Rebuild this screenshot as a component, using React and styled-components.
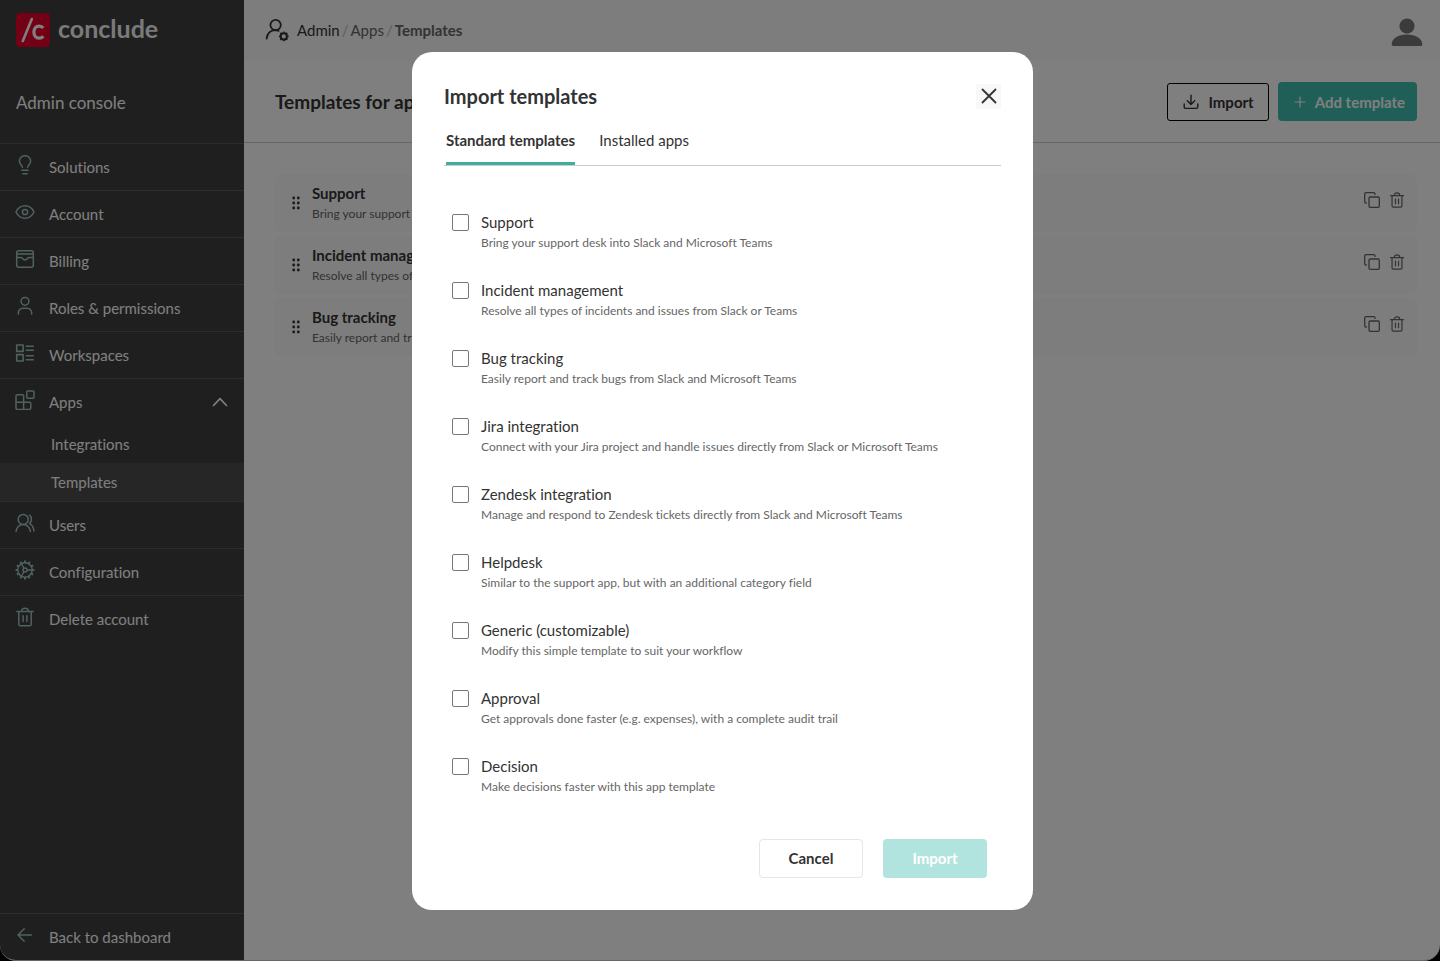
import React, { useState } from "react";
import styled, { createGlobalStyle } from "styled-components";

const strokeProps = {
  fill: "none",
  stroke: "currentColor",
  strokeLinecap: "round",
  strokeLinejoin: "round",
};

const BulbIcon = () => (
  <svg width="20" height="20" viewBox="0 0 20 20" {...strokeProps} strokeWidth="1.5">
    <path d="M7.400 12.200C7.200 10.200 4.400 9.400 4.400 6.300a5.600 5.600 0 0 1 11.200 0c0 3.100-2.800 3.900-3 5.900" />
    <path d="M6.800 15.300h6.400M7.800 18.700h4.400" />
  </svg>
);

const EyeIcon = () => (
  <svg width="20" height="20" viewBox="0 0 20 20" {...strokeProps} strokeWidth="1.5">
    <path d="M1 10c1.800-3.900 5.200-6.200 9-6.200s7.200 2.300 9 6.200c-1.800 3.900-5.200 6.200-9 6.200S2.800 13.900 1 10z" />
    <circle cx="10" cy="10" r="2.600" />
  </svg>
);

const BillingIcon = () => (
  <svg width="20" height="20" viewBox="0 0 20 20" {...strokeProps} strokeWidth="1.5">
    <rect x="1.700" y="1.700" width="16.600" height="16.600" rx="2" />
    <path d="M1.700 5.100h16.600M1.700 8.400h4.500c1 0 1.600 2.600 3.800 2.600s2.800-2.600 3.800-2.600h4.500" />
  </svg>
);

const PersonIcon = () => (
  <svg width="20" height="20" viewBox="0 0 20 20" {...strokeProps} strokeWidth="1.5">
    <circle cx="10" cy="5.300" r="3.900" />
    <path d="M3.400 18v-1.400a4.400 4.400 0 0 1 4.400-4.400h4.400a4.400 4.400 0 0 1 4.400 4.400V18" />
  </svg>
);

const WorkspacesIcon = () => (
  <svg width="20" height="20" viewBox="0 0 20 20" {...strokeProps} strokeWidth="1.6">
    <rect x="1.700" y="2" width="6.400" height="6.400" />
    <rect x="1.700" y="11.600" width="6.400" height="6.400" />
    <path d="M11.300 3.200h7M11.300 7.200h7M11.300 12.800h7M11.300 16.800h7" />
  </svg>
);

const AppsIcon = () => (
  <svg width="20" height="20" viewBox="0 0 20 20" {...strokeProps} strokeWidth="1.5">
    <path d="M2.400 4.800h5.200a1 1 0 0 1 1 1v6.400h6.200a1 1 0 0 1 1 1V18a1.400 1.400 0 0 1-1.400 1.400h-12A1.400 1.400 0 0 1 1 18V6.200a1.400 1.400 0 0 1 1.400-1.400z" />
    <path d="M1 12.200h7.600v7.200" />
    <rect x="11.800" y="1" width="7.200" height="7.200" rx="1" />
  </svg>
);

const UsersIcon = () => (
  <svg width="20" height="20" viewBox="0 0 20 20" {...strokeProps} strokeWidth="1.5">
    <circle cx="8.200" cy="6.400" r="5" />
    <path d="M1 18.400c.8-4.400 3.400-7 7.200-7s6.400 2.600 7.200 7" />
    <path d="M14.600 2c2.400 2 2.400 6.400 0 8.600 2.600 1.200 4 4.200 4.400 7.400" />
  </svg>
);

const GearIcon = () => (
  <svg width="20" height="20" viewBox="0 0 20 20" {...strokeProps} strokeWidth="1.4">
    <circle cx="10" cy="10" r="7.200" />
    <circle cx="10" cy="10" r="2" />
    <path d="M12 10h5M9 8.300 6.500 4M9 11.700 6.500 16" />
    {[...Array(12)].map((_, i) => (
      <path key={i} d="M10 2.600V.6" strokeWidth="2" strokeLinecap="butt" transform={`rotate(${i * 30} 10 10)`} />
    ))}
  </svg>
);

const TrashIcon = ({ size = 20 }) => (
  <svg width={size} height={size} viewBox="0 0 20 20" {...strokeProps} strokeWidth="1.5">
    <path d="M1.900 4.600h16.200M3.800 4.600v12.600a1.600 1.600 0 0 0 1.600 1.600h9.200a1.600 1.600 0 0 0 1.600-1.600V4.600" />
    <path d="M6.600 4.400c0-1.900 1.200-3.200 3.400-3.200s3.400 1.300 3.400 3.200M8.100 8.800v5.800M11.900 8.800v5.800" />
  </svg>
);

const BackIcon = () => (
  <svg width="20" height="20" viewBox="0 0 20 20" {...strokeProps} strokeWidth="1.5">
    <path d="M16.500 10H3M9.200 3.800 3 10l6.200 6.200" />
  </svg>
);

const ChevronUpIcon = () => (
  <svg width="16" height="10" viewBox="0 0 16 10" {...strokeProps} strokeWidth="1.7">
    <path d="m1.500 8.500 6.500-6.800 6.500 6.800" />
  </svg>
);

const AdminIcon = () => (
  <svg width="24" height="24" viewBox="0 0 24 24" {...strokeProps} strokeWidth="1.8">
    <circle cx="10.600" cy="7" r="5.200" />
    <path d="M1.600 20.600c.7-4.800 3.600-8.200 8.600-8.400 1.400 0 2.400.2 3.400.7" />
    <circle cx="18.800" cy="18.400" r="3.100" strokeWidth="2" />
    {[...Array(8)].map((_, i) => (
      <path key={i} d="M18.800 14.800v-1.200" strokeWidth="1.800" strokeLinecap="butt" transform={`rotate(${i * 45} 18.800 18.400)`} />
    ))}
  </svg>
);

const AvatarIcon = () => (
  <svg width="32" height="30" viewBox="0 0 32 30" fill="currentColor">
    <circle cx="16" cy="8" r="7.600" />
    <path d="M.7 26.200c.3-5.600 6.600-9.600 15.300-9.600s15 4 15.300 9.600c.1 1.200-.6 1.800-1.700 1.800H2.400c-1.100 0-1.800-.6-1.700-1.800z" />
  </svg>
);

const DownloadIcon = () => (
  <svg width="16" height="16" viewBox="0 0 16 16" {...strokeProps} strokeWidth="1.4">
    <path d="M8 1.200v9M4.300 6.800 8 10.500l3.700-3.700M1.200 10v2.800a1.600 1.600 0 0 0 1.600 1.600h10.400a1.600 1.600 0 0 0 1.600-1.600V10" />
  </svg>
);

const PlusIcon = () => (
  <svg width="12" height="12" viewBox="0 0 12 12" {...strokeProps} strokeWidth="1.2">
    <path d="M6 1v10M1 6h10" />
  </svg>
);

const CopyIcon = () => (
  <svg width="16" height="16" viewBox="0 0 16 16" {...strokeProps} strokeWidth="1.3">
    <rect x="5" y="5" width="10.300" height="10.300" rx="1.200" />
    <path d="M2.400 11H2A1.300 1.300 0 0 1 .7 9.700V2A1.300 1.300 0 0 1 2 .7h7.700A1.300 1.300 0 0 1 11 2v.4" />
  </svg>
);

const DragIcon = () => (
  <svg width="8" height="14" viewBox="0 0 8 14" fill="currentColor">
    {[2, 7, 12].map((y) => (
      <React.Fragment key={y}>
        <circle cx="1.700" cy={y} r="1.400" />
        <circle cx="6.300" cy={y} r="1.400" />
      </React.Fragment>
    ))}
  </svg>
);

const CloseIcon = () => (
  <svg width="16" height="16" viewBox="0 0 16 16" {...strokeProps} strokeWidth="1.8">
    <path d="m1.500 1.500 13 13M14.500 1.500l-13 13" />
  </svg>
);

const LogoMark = () => (
  <svg width="34" height="34" viewBox="0 0 34 34" fill="none">
    <rect width="34" height="34" rx="4" fill="#e8002c" />
    <path d="M15.800 6 6.800 28" stroke="#fff" strokeWidth="2.600" strokeLinecap="round" />
    <path d="M27.200 15c-1-1.300-2.300-1.900-4-1.900-3.300 0-5.300 2.400-5.300 6 0 3.700 2 6.100 5.200 6.100 1.800 0 3.200-.7 4.300-2" stroke="#fff" strokeWidth="3.200" />
  </svg>
);

const menuTop = [
  { label: "Solutions", Icon: BulbIcon },
  { label: "Account", Icon: EyeIcon },
  { label: "Billing", Icon: BillingIcon },
  { label: "Roles & permissions", Icon: PersonIcon },
  { label: "Workspaces", Icon: WorkspacesIcon },
];

const menuBottom = [
  { label: "Users", Icon: UsersIcon },
  { label: "Configuration", Icon: GearIcon },
  { label: "Delete account", Icon: TrashIcon },
];

const templates = [
  { id: "support", name: "Support", text: "Bring your support desk into Slack and Microsoft Teams" },
  { id: "incident", name: "Incident management", text: "Resolve all types of incidents and issues from Slack or Teams" },
  { id: "bug", name: "Bug tracking", text: "Easily report and track bugs from Slack and Microsoft Teams" },
  { id: "jira", name: "Jira integration", text: "Connect with your Jira project and handle issues directly from Slack or Microsoft Teams" },
  { id: "zendesk", name: "Zendesk integration", text: "Manage and respond to Zendesk tickets directly from Slack and Microsoft Teams" },
  { id: "helpdesk", name: "Helpdesk", text: "Similar to the support app, but with an additional category field" },
  { id: "generic", name: "Generic (customizable)", text: "Modify this simple template to suit your workflow" },
  { id: "approval", name: "Approval", text: "Get approvals done faster (e.g. expenses), with a complete audit trail" },
  { id: "decision", name: "Decision", text: "Make decisions faster with this app template" },
];

const MenuItem = ({ label, Icon, children }) => (
  <MenuLink href="#">
    <MenuIcon>
      <Icon />
    </MenuIcon>
    <MenuLabel>{label}</MenuLabel>
    {children}
  </MenuLink>
);

const Sidebar = () => (
  <SidebarContainer>
    <Logo href="#">
      <LogoMark />
      <LogoText>conclude</LogoText>
    </Logo>
    <ConsoleTitle>Admin console</ConsoleTitle>
    <nav>
      {menuTop.map((item) => (
        <MenuItem key={item.label} {...item} />
      ))}
      <MenuItem label="Apps" Icon={AppsIcon}>
        <ChevronUpIcon />
      </MenuItem>
      <SubLink href="#">Integrations</SubLink>
      <SubLink href="#" $active>
        Templates
      </SubLink>
      {menuBottom.map((item) => (
        <MenuItem key={item.label} {...item} />
      ))}
    </nav>
    <SidebarFooter>
      <MenuItem label="Back to dashboard" Icon={BackIcon} />
    </SidebarFooter>
  </SidebarContainer>
);

const ImportDialog = () => {
  const [tab, setTab] = useState("standard");
  const [selected, setSelected] = useState([]);

  const handleToggle = (id) => {
    setSelected(
      selected.includes(id) ? selected.filter((s) => s !== id) : [...selected, id]
    );
  };

  return (
    <Overlay>
      <Dialog role="dialog" aria-modal="true" aria-labelledby="import-title">
        <DialogHeader>
          <Title id="import-title">Import templates</Title>
          <CloseButton aria-label="Close">
            <CloseIcon />
          </CloseButton>
        </DialogHeader>
        <Tabs role="tablist">
          <Tab role="tab" $active={tab === "standard"} aria-selected={tab === "standard"} onClick={() => setTab("standard")}>
            Standard templates
          </Tab>
          <Tab role="tab" $active={tab === "installed"} aria-selected={tab === "installed"} onClick={() => setTab("installed")}>
            Installed apps
          </Tab>
        </Tabs>
        <Options>
          {tab === "standard" &&
            templates.map(({ id, name, text }) => (
              <Option key={id} htmlFor={id}>
                <Checkbox
                  id={id}
                  type="checkbox"
                  checked={selected.includes(id)}
                  onChange={() => handleToggle(id)}
                />
                <div>
                  <Name>{name}</Name>
                  <Description>{text}</Description>
                </div>
              </Option>
            ))}
        </Options>
        <DialogFooter>
          <DialogButton>Cancel</DialogButton>
          <DialogButton $primary disabled={selected.length === 0}>
            Import
          </DialogButton>
        </DialogFooter>
      </Dialog>
    </Overlay>
  );
};

const App = () => (
  <>
    <GlobalStyle />
    <Page>
      <Sidebar />
      <Main>
        <TopBar>
          <AdminIcon />
          <Breadcrumbs aria-label="Breadcrumb">
            <Crumb href="#" $dark>Admin</Crumb>
            <Slash>/</Slash>
            <Crumb href="#">Apps</Crumb>
            <Slash>/</Slash>
            <CurrentCrumb>Templates</CurrentCrumb>
          </Breadcrumbs>
          <AvatarButton aria-label="Profile">
            <AvatarIcon />
          </AvatarButton>
        </TopBar>
        <Header>
          <PageTitle>Templates for apps</PageTitle>
          <Actions>
            <OutlineButton>
              <DownloadIcon />
              Import
            </OutlineButton>
            <AddButton>
              <PlusIcon />
              Add template
            </AddButton>
          </Actions>
        </Header>
        <List>
          {templates.slice(0, 3).map(({ id, name, text }) => (
            <Card key={id}>
              <DragIcon />
              <CardText>
                <Name $bold>{name}</Name>
                <Description>{text}</Description>
              </CardText>
              <IconButton aria-label={`Copy ${name}`}>
                <CopyIcon />
              </IconButton>
              <IconButton aria-label={`Delete ${name}`}>
                <TrashIcon size={16} />
              </IconButton>
            </Card>
          ))}
        </List>
      </Main>
    </Page>
    <ImportDialog />
  </>
);

export default App;

const GlobalStyle = createGlobalStyle`
  * {
    box-sizing: border-box;
  }

  body {
    margin: 0;
    background: #000000;
    color: #333333;
    font-family: Lato, "Liberation Sans", sans-serif;
    font-size: 15px;
    font-variant-ligatures: none;
  }

  button {
    padding: 0;
    border: none;
    background: none;
    color: inherit;
    font: inherit;
    cursor: pointer;
  }

  a {
    color: inherit;
    text-decoration: none;
  }

  svg {
    display: block;
    flex: none;
  }
`;

const Page = styled.div`
  display: flex;
  min-height: 100vh;
  border-bottom: 1px solid #cccccc;
  border-radius: 0 0 16px 16px;
  background: #ffffff;
  overflow: hidden;
`;

const SidebarContainer = styled.aside`
  display: flex;
  flex-direction: column;
  flex: none;
  width: 244px;
  background: #3e3e3e;
  color: #ffffff;
`;

const Logo = styled.a`
  display: flex;
  align-items: center;
  gap: 8px;
  height: 60px;
  padding: 0 16px;
`;

const LogoText = styled.span`
  padding-bottom: 4px;
  color: #f4f4f4;
  font-size: 25px;
  font-weight: bold;
`;

const ConsoleTitle = styled.div`
  height: 83px;
  padding: 0 16px;
  line-height: 86px;
  font-size: 17px;
`;

const MenuLink = styled.a`
  display: flex;
  align-items: center;
  gap: 14px;
  height: 47px;
  padding: 0 16px 0 15px;
  border-top: 1px solid #585858;
`;

const MenuIcon = styled.span`
  padding-bottom: 4px;
  color: #9fc4be;
`;

const MenuLabel = styled.span`
  flex: 1;
`;

const SubLink = styled.a`
  display: block;
  height: 38px;
  padding-left: 51px;
  line-height: 38px;
  background: ${(props) => (props.$active ? "#4c4c4c" : "none")};
`;

const SidebarFooter = styled.div`
  margin-top: auto;
`;

const Main = styled.main`
  flex: 1;
  min-width: 0;
`;

const TopBar = styled.header`
  display: flex;
  align-items: center;
  gap: 8px;
  height: 61px;
  padding: 0 17px 2px 21px;
  background: #fafafa;
`;

const Breadcrumbs = styled.nav`
  display: flex;
  flex: 1;
  gap: 2px;
`;

const Crumb = styled.a`
  color: ${(props) => (props.$dark ? "#333333" : "#666666")};
`;

const Slash = styled.span`
  color: #bbbbbb;
`;

const CurrentCrumb = styled.span`
  color: #666666;
  font-weight: bold;
`;

const AvatarButton = styled.button`
  padding-top: 6px;
  color: #777777;
`;

const Header = styled.div`
  display: flex;
  align-items: center;
  justify-content: space-between;
  height: 82px;
  padding: 0 23px 0 31px;
  border-bottom: 1px solid #cccccc;
`;

const Title = styled.h2`
  margin: 0;
  font-size: 20px;
  line-height: 24px;
  font-weight: bold;
`;

const PageTitle = styled(Title)`
  font-size: 19px;
`;

const Actions = styled.div`
  display: flex;
  align-items: center;
  gap: 9px;
`;

const OutlineButton = styled.button`
  display: flex;
  align-items: center;
  gap: 9px;
  height: 38px;
  padding: 0 14px 0 15px;
  border: 1px solid #000000;
  border-radius: 3px;
  font-weight: bold;
`;

const AddButton = styled.button`
  display: flex;
  align-items: center;
  gap: 9px;
  height: 39px;
  padding: 0 12px 0 16px;
  border-radius: 4px;
  background: #3fbeaf;
  color: #ffffff;
  font-weight: bold;
`;

const List = styled.div`
  display: flex;
  flex-direction: column;
  gap: 4px;
  padding: 31px 23px 0 31px;
`;

const Card = styled.div`
  display: flex;
  align-items: center;
  gap: 9px;
  height: 58px;
  padding: 0 12px 0 17px;
  border-radius: 6px;
  background: #fafafa;
`;

const CardText = styled.div`
  flex: 1;
  padding-left: 3px;
`;

const Name = styled.div`
  line-height: 21px;
  font-weight: ${(props) => (props.$bold ? "bold" : "normal")};
`;

const Description = styled.div`
  color: #666666;
  font-size: 12px;
  line-height: 20px;
`;

const IconButton = styled.button`
  padding-bottom: 6px;
  color: #666666;
`;

const Overlay = styled.div`
  position: fixed;
  inset: 0;
  display: flex;
  align-items: center;
  justify-content: center;
  padding-left: 5px;
  background: rgba(0, 0, 0, 0.5);
`;

const Dialog = styled.section`
  width: 621px;
  max-width: 100%;
  padding: 32px;
  border-radius: 20px;
  background: #ffffff;
`;

const DialogHeader = styled.div`
  display: flex;
  align-items: center;
  justify-content: space-between;
`;

const CloseButton = styled.button`
  display: flex;
  align-items: center;
  justify-content: center;
  width: 25px;
  height: 25px;
  background: #f8f8f8;
`;

const Tabs = styled.div`
  display: flex;
  gap: 24px;
  height: 57px;
  padding: 0 2px;
  border-bottom: 1px solid #cccccc;
`;

const Tab = styled.button`
  padding-top: 10px;
  border-bottom: 3px solid ${(props) => (props.$active ? "#3dae9f" : "transparent")};
  font-weight: ${(props) => (props.$active ? "bold" : "normal")};
`;

const Options = styled.div`
  display: flex;
  flex-direction: column;
  gap: 27px;
  padding: 46px 8px 0;
`;

const Option = styled.label`
  display: flex;
  align-items: flex-start;
  gap: 12px;
`;

const Checkbox = styled.input`
  appearance: none;
  flex: none;
  width: 17px;
  height: 17px;
  margin: 2px 0 0;
  border: 1px solid #777777;
  border-radius: 2px;
  background: #ffffff;

  &:checked {
    background: #3fbeaf;
  }
`;

const DialogFooter = styled.div`
  display: flex;
  justify-content: flex-end;
  gap: 20px;
  padding: 42px 14px 0 0;
`;

const DialogButton = styled.button`
  width: 104px;
  height: 39px;
  border: ${(props) => (props.$primary ? "none" : "1px solid #e6e6e6")};
  border-radius: 4px;
  background: ${(props) => (props.$primary ? "#3fbeaf" : "#ffffff")};
  color: ${(props) => (props.$primary ? "#ffffff" : "#333333")};
  font-weight: bold;

  &:disabled {
    opacity: 0.4;
  }
`;
